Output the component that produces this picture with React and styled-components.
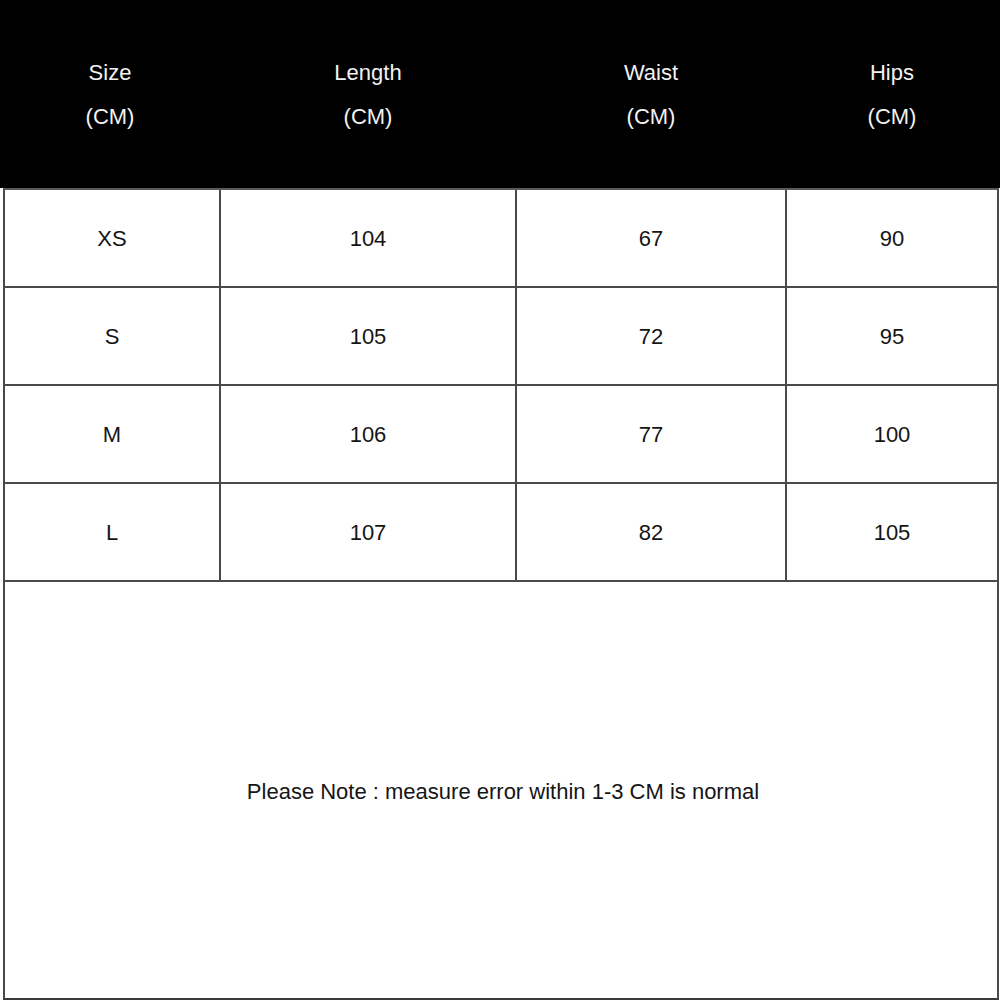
import React from "react";
import styled, { createGlobalStyle } from "styled-components";

const Global = createGlobalStyle`
  html, body { margin: 0; padding: 0; background: #fff; }
  body { font-family: "Liberation Sans", Arial, sans-serif; }
`;

const COLS = "216px 296px 270px 1fr";

const Page = styled.div`
  width: 1000px;
  height: 1000px;
  display: flex;
  flex-direction: column;
  background: #fff;
  color: #111;
`;

const HeaderRow = styled.div`
  height: 188px;
  background: #000;
  display: grid;
  grid-template-columns: 220px 296px 270px 1fr;
  padding-right: 2px;
`;

const HeadCell = styled.div`
  display: flex;
  flex-direction: column;
  align-items: center;
  justify-content: center;
  gap: 20px;
  color: #f2f2f2;
  font-size: 22px;
  line-height: 24px;
  padding-top: 2px;
`;

const Body = styled.div`
  flex: 1;
  margin-left: 3px;
  margin-right: 1px;
  display: flex;
  flex-direction: column;
  border-left: 2px solid #4a4a4a;
  border-right: 2px solid #4a4a4a;
  border-bottom: 2px solid #3a3a3a;
  border-top: 2px solid #5a5a5a;
`;

const Row = styled.div`
  height: 96px;
  display: grid;
  grid-template-columns: ${COLS};
  border-bottom: 2px solid #4a4a4a;
`;

const Cell = styled.div`
  display: flex;
  align-items: center;
  justify-content: center;
  font-size: 22px;
  color: #151515;
  padding-top: 2px;
  border-right: ${(p) => (p.$last ? "none" : "2px solid #4a4a4a")};
`;

const Note = styled.div`
  flex: 1;
  display: flex;
  align-items: center;
  justify-content: center;
  font-size: 22px;
  color: #151515;
  padding-top: 3px;
  padding-left: 4px;
`;

const headers = [
  ["Size", "(CM)"],
  ["Length", "(CM)"],
  ["Waist", "(CM)"],
  ["Hips", "(CM)"],
];

const rows = [
  ["XS", "104", "67", "90"],
  ["S", "105", "72", "95"],
  ["M", "106", "77", "100"],
  ["L", "107", "82", "105"],
];

export default function App() {
  return (
    <>
      <Global />
      <Page>
        <HeaderRow>
          {headers.map(([a, b]) => (
            <HeadCell key={a}>
              <span>{a}</span>
              <span>{b}</span>
            </HeadCell>
          ))}
        </HeaderRow>
        <Body>
          {rows.map((r) => (
            <Row key={r[0]}>
              {r.map((v, i) => (
                <Cell key={i} $last={i === r.length - 1}>
                  {v}
                </Cell>
              ))}
            </Row>
          ))}
          <Note>Please Note : measure error within 1-3 CM is normal</Note>
        </Body>
      </Page>
    </>
  );
}
